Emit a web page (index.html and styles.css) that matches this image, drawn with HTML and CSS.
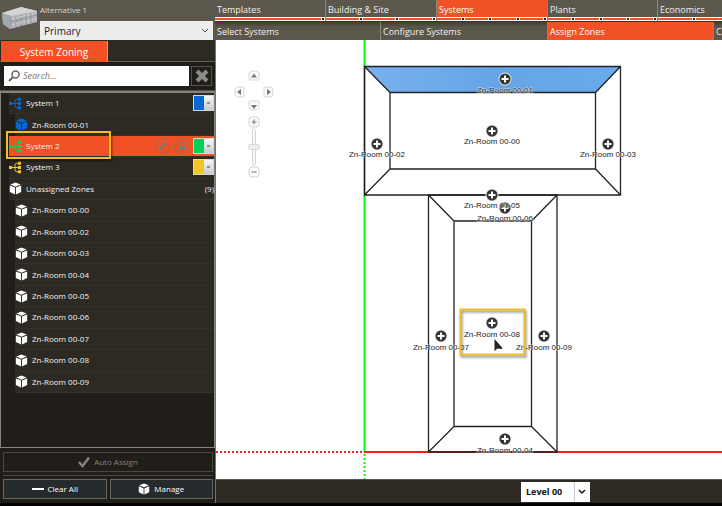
FILE: index.html
```html
<!DOCTYPE html>
<html lang="en">
<head>
<meta charset="utf-8">
<title>System Zoning</title>
<link rel="stylesheet" href="styles.css">
</head>
<body>
<svg class="defs" aria-hidden="true">
  <symbol id="cube" viewBox="0 0 14 14"><path fill="currentColor" d="M7 .6 12.6 2.7 7 5 1.4 2.7ZM.9 3.7 6.5 6v7.4L.9 10.8ZM13.1 3.7 7.5 6v7.4l5.6-2.6Z"/></symbol>
  <symbol id="tree" viewBox="0 0 13 12"><path fill="none" stroke="currentColor" d="M2 6h7M9 1.8H7.5Q6 1.8 6 4v4q0 2.2 1.500 2.200H9"/><path fill="currentColor" d="M0 4.500h3v3H0zM9 .3h3v3H9zM9 4.500h3v3H9zM9 8.700h3v3H9z"/></symbol>
  <symbol id="marker" viewBox="-7 -7 14 14"><circle r="6.500" fill="#dfe5f2"/><circle r="5.500" fill="#37332d"/><path d="M-3.500 0h7M0-3.500v7" stroke="#fff" stroke-width="2"/></symbol>
</svg>
<div class="app">
  <header class="header">
    <div class="project">
      <svg class="building" viewBox="0 0 36 24" aria-hidden="true">
        <path fill="#b4b6b9" d="M0 7 19 1l16 4v11L8 23 1 18Z"/>
        <path fill="#d2d3d4" d="M0 7 19 1l16 4L9 10Z"/>
        <path fill="#a2a6ae" d="M0 7l9 3-1 13-7-5Z"/>
        <path fill="none" stroke="#8e929b" d="M9 11v12M14 10v11M19 9v11M24 8v11M29 7v11M9 16l26-7"/>
        <path fill="none" stroke="#ddd" stroke-dasharray="2 2" d="M10 13l24-6M10 19l24-6M5 6l19-3"/>
      </svg>
      <label class="project-name" for="alternative">Alternative 1</label>
      <div class="picker">
        <select id="alternative"><option>Primary</option></select>
        <svg class="chevron" viewBox="0 0 8 6" aria-hidden="true"><path d="M1 1l3 3 3-3" fill="none" stroke="#555"/></svg>
      </div>
    </div>
    <nav class="nav">
      <div class="tabs">
        <a class="tab" href="#">Templates<span class="steps"><i></i></span></a>
        <a class="tab" href="#">Building &amp; Site<span class="steps"><i></i><i></i><i></i></span></a>
        <a class="tab active" href="#">Systems<span class="steps"><i></i><i></i><i></i><i></i></span></a>
        <a class="tab" href="#">Plants<span class="steps"><i></i><i></i><i></i><i></i></span></a>
        <a class="tab" href="#">Economics<span class="steps"><i></i><i></i><i></i></span></a>
      </div>
      <div class="subtabs">
        <a class="subtab" href="#">Select Systems</a>
        <a class="subtab" href="#">Configure Systems</a>
        <a class="subtab active" href="#">Assign Zones</a>
        <a class="subtab" href="#">C</a>
      </div>
    </nav>
  </header>

  <aside class="sidebar">
    <div class="panel-tabs"><button class="panel-tab">System Zoning</button></div>
    <div class="search">
      <label class="search-box">
        <svg class="lens" viewBox="0 0 12 12" aria-hidden="true"><circle cx="7.500" cy="4.500" r="3.500" fill="none" stroke="#666" stroke-width="1.500"/><path d="M5 7 1 11" stroke="#666" stroke-width="2"/></svg>
        <input type="search" placeholder="Search..." aria-label="Search">
      </label>
      <button class="clear" aria-label="Clear search"><svg viewBox="0 0 14 14"><path d="M2 2l10 10M12 2 2 12" stroke="#8b8b8b" stroke-width="4"/></svg></button>
    </div>
    <div class="tree">
      <ul class="rows">
        <li class="row blue"><svg class="icon"><use href="#tree"/></svg>System 1<button class="swatch" aria-label="System 1 color"></button></li>
        <li class="row child blue"><svg class="icon"><use href="#cube"/></svg>Zn-Room 00-01</li>
        <li class="row selected green"><svg class="icon"><use href="#tree"/></svg>System 2
          <span class="tools">
            <button class="round" aria-label="Edit"><svg viewBox="0 0 16 16"><circle cx="8" cy="8" r="7.300"/><path class="solid" d="M4 12l1-3 5-5 2 2-5 5Z"/></svg></button>
            <button class="round" aria-label="Delete"><svg viewBox="0 0 16 16"><circle cx="8" cy="8" r="7.300"/><path class="solid" d="M5 5h1V4h4v1h1v1H5ZM5 7h6v5H5Z"/></svg></button>
            <button class="swatch" aria-label="System 2 color"></button>
          </span>
          <span class="highlight"></span></li>
        <li class="row yellow"><svg class="icon"><use href="#tree"/></svg>System 3<button class="swatch" aria-label="System 3 color"></button></li>
        <li class="row"><svg class="icon"><use href="#cube"/></svg>Unassigned Zones<span class="count">(9)</span></li>
        <li class="row child"><svg class="icon"><use href="#cube"/></svg>Zn-Room 00-00</li>
        <li class="row child"><svg class="icon"><use href="#cube"/></svg>Zn-Room 00-02</li>
        <li class="row child"><svg class="icon"><use href="#cube"/></svg>Zn-Room 00-03</li>
        <li class="row child"><svg class="icon"><use href="#cube"/></svg>Zn-Room 00-04</li>
        <li class="row child"><svg class="icon"><use href="#cube"/></svg>Zn-Room 00-05</li>
        <li class="row child"><svg class="icon"><use href="#cube"/></svg>Zn-Room 00-06</li>
        <li class="row child"><svg class="icon"><use href="#cube"/></svg>Zn-Room 00-07</li>
        <li class="row child"><svg class="icon"><use href="#cube"/></svg>Zn-Room 00-08</li>
        <li class="row child"><svg class="icon"><use href="#cube"/></svg>Zn-Room 00-09</li>
      </ul>
    </div>
    <div class="actions">
      <button class="action" disabled><svg class="small-icon" viewBox="0 0 12 12"><path d="M1 6l3.500 4L11 1.500" fill="none" stroke="currentColor" stroke-width="2.500"/></svg>Auto Assign</button>
      <div class="pair">
        <button class="action"><svg class="small-icon" viewBox="0 0 12 12"><path d="M0 6h12" stroke="currentColor" stroke-width="2"/></svg>Clear All</button>
        <button class="action"><svg class="small-icon"><use href="#cube"/></svg>Manage</button>
      </div>
    </div>
  </aside>

  <main class="canvas">
    <svg class="plan" role="img" aria-label="Zone plan">
      <g transform="translate(-216 -40)">
        <path d="M364.500 40v412" stroke="#0f0" stroke-width="2"/>
        <path d="M364.500 454v26" stroke="#0f0" stroke-width="2" stroke-dasharray="2 2"/>
        <path d="M216 452h148" stroke="#f22" stroke-width="2" stroke-dasharray="2 2"/>
        <path d="M364 452h4000" stroke="#fb1e1e" stroke-width="2"/>
        <linearGradient id="sky"><stop stop-color="#79b2ed"/><stop offset=".5" stop-color="#65a5e6"/><stop offset="1" stop-color="#69aaec"/></linearGradient>
        <path d="M364.500 66.500h256l-25 26h-206Z" fill="url(#sky)"/>
        <g fill="none" stroke="#222" stroke-width="1.300">
          <path d="M364.500 66.500h256v128.500h-256ZM390 92.500h205.500V169H390ZM364.500 66.500 390 92.500M620.500 66.500l-25 26M364.500 195 390 169M620.500 195l-25-26"/>
          <path d="M428.500 195h128.500v257H428.500ZM454 221h77.500v205.500H454ZM428.500 195 454 221M557 195l-25.500 26M428.500 452 454 426.500M557 452l-25.500-25.500"/>
        </g>
        <g class="zones">
          <use href="#marker" x="498" y="72" width="14" height="14"/><text x="505" y="93">Zn-Room 00-01</text>
          <use href="#marker" x="485" y="124" width="14" height="14"/><text x="492" y="144">Zn-Room 00-00</text>
          <use href="#marker" x="370" y="137" width="14" height="14"/><text x="377" y="157">Zn-Room 00-02</text>
          <use href="#marker" x="601" y="137" width="14" height="14"/><text x="608" y="157">Zn-Room 00-03</text>
          <use href="#marker" x="498" y="201" width="14" height="14"/><text x="505" y="221">Zn-Room 00-06</text>
          <use href="#marker" x="485" y="188" width="14" height="14"/><text x="492" y="208">Zn-Room 00-05</text>
          <use href="#marker" x="485" y="316" width="14" height="14"/><text x="492" y="337">Zn-Room 00-08</text>
          <use href="#marker" x="434" y="329" width="14" height="14"/><text x="441" y="350">Zn-Room 00-07</text>
          <use href="#marker" x="537" y="329" width="14" height="14"/><text x="544" y="350">Zn-Room 00-09</text>
          <use href="#marker" x="498" y="432" width="14" height="14"/><text x="505" y="453">Zn-Room 00-04</text>
        </g>
        <rect class="focus" x="460.500" y="309.500" width="64" height="45"/>
        <path d="M494.500 339v12l3-2.500 4 .5 1-1Z" fill="#222"/>
        <g class="controls">
          <path d="M249 79v-5q0-3 5-3t5 3v5q0 1-1 1h-8q-1 0-1-1ZM249 102v5q0 3 5 3t5-3v-5q0-1-1-1h-8q-1 0-1 1ZM243 87h-5q-3 0-3 5t3 5h5q1 0 1-1v-8q0-1-1-1ZM265 87h5q3 0 3 5t-3 5h-5q-1 0-1-1v-8q0-1 1-1Z"/>
          <rect x="249" y="117" width="10" height="10" rx="3"/>
          <rect x="252.500" y="129" width="3" height="36" rx="1.500"/>
          <rect x="248.500" y="144.500" width="11" height="5" rx="2" fill="#eee"/>
          <rect x="249" y="167" width="10" height="10" rx="3"/>
          <path class="glyph" d="M251 77.500h6l-3-4ZM251 105h6l-3 4ZM241 89v6l-4-3ZM267 89v6l4-3ZM251.500 121.500h2v-2h1v2h2v1h-2v2h-1v-2h-2ZM251.500 171.500h5v1h-5Z"/>
        </g>
      </g>
    </svg>
  </main>

  <footer class="footer">
    <div class="level">
      <select aria-label="Level"><option>Level 00</option></select>
      <svg class="chevron" viewBox="0 0 8 6" aria-hidden="true"><path d="M1 1l3 3 3-3" fill="none" stroke="#111" stroke-width="1.500"/></svg>
    </div>
  </footer>
</div>
</body>
</html>
```
FILE: styles.css
```css
* { box-sizing: border-box; }

body {
  margin: 0;
  background: #000;
  color: #f2f1ef;
  font: 8px/12px "Open Sans", "Noto Sans", sans-serif;
}

button, select, input { font: inherit; color: inherit; margin: 0; padding: 0; border: 0; border-radius: 0; appearance: none; }
a { color: inherit; text-decoration: none; }
svg { display: block; }
.defs { position: absolute; width: 0; height: 0; }

.app {
  display: grid;
  grid-template: auto 1fr 24px / 216px 1fr;
  min-height: 100vh;
  padding-bottom: 3px;
}

/* Header */
.header {
  grid-column: 1 / -1;
  display: grid;
  grid-template-columns: 215px 1fr;
  height: 40px;
  background: #5c574c;
}
.project {
  display: grid;
  grid-template: 21px 19px / 38px 1fr;
  padding: 0 2px;
}
.building { grid-row: 1 / -1; width: 36px; height: 24px; margin-top: 6px; }
.project-name { padding-top: 4px; color: #dddad3; }
.picker, .level { position: relative; color: #222; }
.picker select { width: 100%; height: 19px; padding-left: 4px; background: #ededed; font-size: 10px; }
.chevron { position: absolute; right: 4px; top: 7px; width: 8px; height: 6px; pointer-events: none; }

.nav { min-width: 0; overflow: hidden; font-size: 9px; color: #f2f0ec; }
.tabs { display: grid; grid-template-columns: 110px 111px 111px 110px 114px; height: 22px; background: #37342d; }
.tab { display: flex; flex-direction: column; justify-content: space-between; height: 21px; padding-top: 4px; background: #5c574c; text-indent: 2px; }
.tab + .tab { border-left: 1px solid #8b877d; }
.tab.active, .subtab.active { background: #f15124; color: #fff; }
.steps { display: flex; height: 4px; background: #fff; }
.steps i { flex: 1; margin: 1px 0; background: linear-gradient(#222, #222) right 1px top / 2px 100% no-repeat, linear-gradient(#fff, #fff) right / 4px 100% no-repeat, #f15124; }
.subtabs { display: grid; grid-template-columns: 165px 167px 166px 1fr; height: 18px; background: linear-gradient(#403d35, #5c574c 5px); }
.subtab { padding-top: 4px; text-indent: 2px; }
.subtab + .subtab { border-left: 1px solid #8b877d; }

/* Sidebar */
.sidebar {
  grid-row: 2 / 4;
  display: flex;
  flex-direction: column;
  background: #211e19;
  border-right: 1px solid #77746d;
}
.panel-tabs { height: 22px; padding: 1px 0 0 1px; background: #2d2a24; border-bottom: 1px solid #625f58; }
.panel-tab { width: 107px; height: 21px; background: #f15124; border-right: 1px solid #aaa; color: #fff; font-size: 10px; }
.search { display: flex; gap: 2px; height: 29px; padding: 4px 3px 4px 4px; border-bottom: 1px solid #55524b; }
.search-box { flex: 1; display: flex; align-items: center; gap: 3px; padding-left: 4px; background: #fff; }
.search-box input { flex: 1; min-width: 0; background: none; color: #222; font-size: 9px; font-style: italic; }
.search-box input::placeholder { color: #777; }
.lens { width: 12px; height: 12px; }
.clear { display: grid; place-items: center; width: 21px; background: #211e19; border: 1px solid #55524b; }
.clear svg { width: 14px; height: 14px; }

.tree { flex: 1; border: 1px solid #85827b; border-top-width: 2px; }
.rows { display: grid; grid-template-rows: repeat(14, 1fr); height: 300px; margin: 0; padding: 0; list-style: none; }
.row {
  position: relative;
  display: flex;
  align-items: center;
  gap: 4px;
  margin-left: 8px;
  background: #2d2a24;
  border-bottom: 1px solid #34312c;
}
.row.child { margin-left: 14px; }
.row.selected { z-index: 1; background: #f15124; }
.icon { width: 13px; height: 13px; color: #fff; }
.blue { --tone: #0868d2; }
.green { --tone: #08d052; }
.yellow { --tone: #f2c62b; }
.blue .icon, .green .icon, .yellow .icon { color: var(--tone); }
.swatch {
  width: 21px;
  height: 16px;
  margin-left: auto;
  border: 1px solid #d5d9dc;
  background:
    linear-gradient(#8a9096, #8a9096) right 3px top 6px / 3px 2px no-repeat,
    linear-gradient(#f5f7f9, #c5cdd2) right / 9px 100% no-repeat,
    var(--tone);
}
.tools { display: flex; gap: 3px; margin-left: auto; }
.round { width: 16px; height: 16px; background: none; }
.round svg { width: 16px; height: 16px; fill: none; stroke: #9a6a55; }
.round .solid { fill: #867468; stroke: none; }
.count { margin-left: auto; }
.highlight {
  position: absolute;
  inset: -5px 103px -3px -3px;
  border: 2px solid #f4bd27;
  box-shadow: 1px 2px 2px #0008;
}

.actions { display: grid; gap: 3px; padding: 4px 2px 4px 3px; }
.action { display: flex; flex: 1; align-items: center; justify-content: center; gap: 4px; height: 20px; background: #252a2d; border: 1px solid #68675f; color: #fff; }
.action:disabled { background: #211e19; border-color: #4b4841; color: #85827c; }
.small-icon { width: 12px; height: 12px; }
.pair { display: flex; gap: 3px; border-top: 1px solid #4b4841; padding-top: 3px; }

/* Plan */
.canvas { min-width: 0; background: #fff; }
.plan { width: 100%; height: 100%; }
.zones text { font: 8px "Liberation Sans", sans-serif; fill: #222; text-anchor: middle; stroke: #fff; stroke-opacity: .7; stroke-width: 1px; paint-order: stroke; }
.focus { fill: none; stroke: #f4bd27; stroke-width: 2px; filter: drop-shadow(1px 2px 1px #0007); }
.controls { fill: #fafafa; stroke: #d5d5d5; }
.controls .glyph { fill: #777; stroke: none; }

.footer { display: flex; padding: 2px 0 2px 305px; background: #2d2a24; border-top: 1px solid #56534b; }
.level select { width: 69px; height: 20px; padding-left: 5px; background: linear-gradient(#ccc, #ccc) right 15px top / 1px 100% no-repeat, #fff; color: #111; font-weight: 700; font-size: 9px; }
```
